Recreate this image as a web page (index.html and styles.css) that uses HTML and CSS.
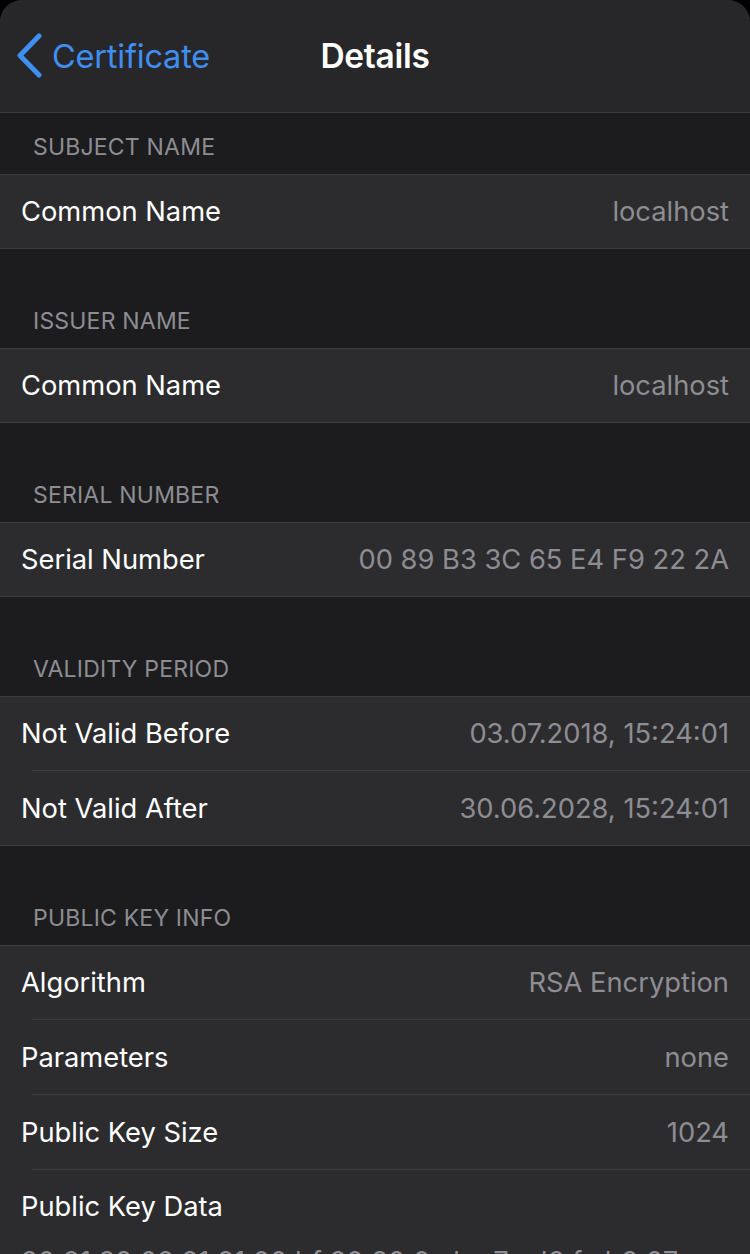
FILE: index.html
```html
<!DOCTYPE html>
<html>
<head>
<meta charset="utf-8">
<link rel="stylesheet" href="styles.css">
</head>
<body>
<div class="sheet">
  <header class="nav">
    <div class="back">
      <svg class="chev" width="30" height="46" viewBox="0 0 30 46"><path d="M23 3 L4 22.5 L23 42" fill="none" stroke="#3f8ff0" stroke-width="5" stroke-linecap="round" stroke-linejoin="round"/></svg>
      <span class="back-label">Certificate</span>
    </div>
    <div class="title">Details</div>
  </header>

  <section class="section first">
    <div class="section-header">SUBJECT NAME</div>
    <div class="group">
      <div class="row"><span class="label">Common Name</span><span class="value">localhost</span></div>
    </div>
  </section>

  <section class="section">
    <div class="section-header">ISSUER NAME</div>
    <div class="group">
      <div class="row"><span class="label">Common Name</span><span class="value">localhost</span></div>
    </div>
  </section>

  <section class="section">
    <div class="section-header">SERIAL NUMBER</div>
    <div class="group">
      <div class="row"><span class="label">Serial Number</span><span class="value">00 89 B3 3C 65 E4 F9 22 2A</span></div>
    </div>
  </section>

  <section class="section">
    <div class="section-header">VALIDITY PERIOD</div>
    <div class="group">
      <div class="row"><span class="label">Not Valid Before</span><span class="value">03.07.2018, 15:24:01</span></div>
      <div class="row"><span class="label">Not Valid After</span><span class="value">30.06.2028, 15:24:01</span></div>
    </div>
  </section>

  <section class="section">
    <div class="section-header">PUBLIC KEY INFO</div>
    <div class="group">
      <div class="row"><span class="label">Algorithm</span><span class="value">RSA Encryption</span></div>
      <div class="row"><span class="label">Parameters</span><span class="value">none</span></div>
      <div class="row"><span class="label">Public Key Size</span><span class="value">1024</span></div>
      <div class="row stacked"><span class="label">Public Key Data</span><span class="data">30 81 89 02 81 81 00 bf 80 30 0a bc 7e d6 fa b9 27</span></div>
    </div>
  </section>
</div>
</body>
</html>
```
FILE: styles.css
```css
html, body {
  margin: 0;
  padding: 0;
  background: #000;
}
body {
  width: 750px;
  height: 1254px;
  overflow: hidden;
  font-family: Inter, "Liberation Sans", sans-serif;
}
.sheet {
  background: #1c1c1e;
  border-radius: 22px 22px 0 0;
  overflow: hidden;
  height: 1254px;
}
.nav {
  background: #272729;
  border-bottom: 1px solid #3d3d40;
  box-sizing: border-box;
  height: 113px;
  position: relative;
  display: flex;
  align-items: center;
}
.back {
  display: flex;
  align-items: center;
  padding-left: 16px;
  gap: 6px;
}
.chev { display: block; }
.back-label {
  color: #3f8ff0;
  font-size: 32.5px;
  letter-spacing: -0.2px;
}
.title {
  position: absolute;
  left: 0;
  right: 0;
  top: 0;
  bottom: 0;
  display: flex;
  align-items: center;
  justify-content: center;
  color: #fff;
  font-weight: 600;
  font-size: 33.5px;
  letter-spacing: -0.3px;
  pointer-events: none;
}
.section-header {
  height: 99px;
  box-sizing: border-box;
  display: flex;
  align-items: flex-end;
  padding: 0 0 13px 33px;
  line-height: 28px;
  color: #8d8d93;
  font-size: 23px;
  letter-spacing: 0.2px;
}
.section.first .section-header {
  height: 61px;
}
.group {
  background: #2c2c2e;
  border-top: 1px solid #3d3d40;
  border-bottom: 1px solid #3d3d40;
}
.row {
  height: 75px;
  display: flex;
  align-items: center;
  justify-content: space-between;
  padding: 0 21px;
  font-size: 27.3px;
  position: relative;
  box-sizing: border-box;
}
.row:first-child { height: 73px; }
.row + .row { border-top: 1px solid #3d3d40; }
.row + .row::before {
  content: "";
  position: absolute;
  left: 0;
  top: -1px;
  width: 32px;
  height: 1px;
  background: #2c2c2e;
}
.label { color: #fff; }
.value { color: #8d8d93; }
.row.stacked {
  height: auto;
  flex-direction: column;
  align-items: flex-start;
  justify-content: flex-start;
  padding-top: 21px;
  padding-bottom: 20px;
  line-height: 32px;
  gap: 23px;
}
.data {
  color: #8d8d93;
  font-size: 27.3px;
  white-space: nowrap;
}
```
